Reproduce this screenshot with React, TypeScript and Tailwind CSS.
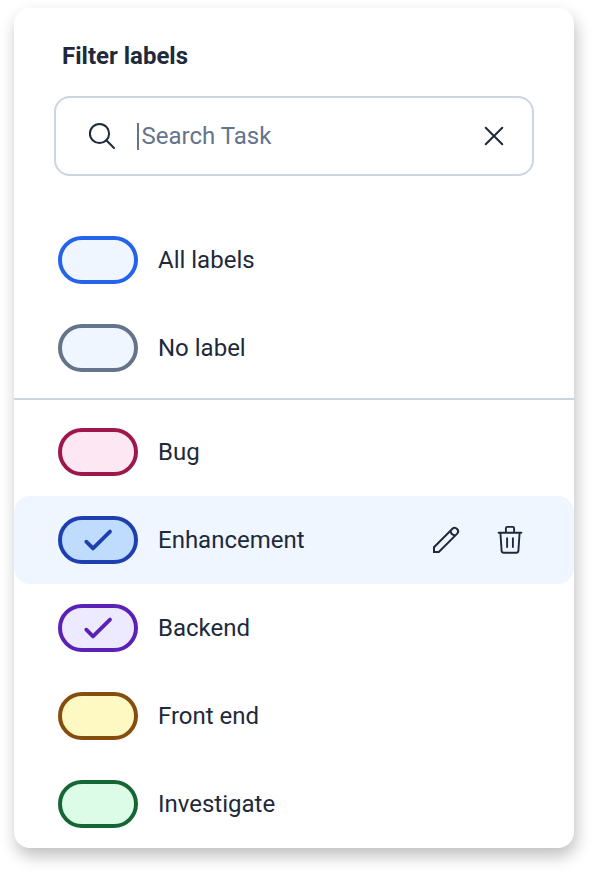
import React from "react";

type Label = {
  name: string;
  swatch: string;
  checked?: boolean;
  active?: boolean;
};

const generalLabels: Label[] = [
  { name: "All labels", swatch: "border-[#2563eb] bg-[#eff6ff]" },
  { name: "No label", swatch: "border-[#64748b] bg-[#eff6ff]" },
];

const customLabels: Label[] = [
  { name: "Bug", swatch: "border-[#9d174d] bg-[#fce7f3]" },
  { name: "Enhancement", swatch: "border-[#1e40af] bg-[#bfdbfe] text-[#1e40af]", checked: true, active: true },
  { name: "Backend", swatch: "border-[#5b21b6] bg-[#ede9fe] text-[#5b21b6]", checked: true },
  { name: "Front end", swatch: "border-[#854d0e] bg-[#fef9c3]" },
  { name: "Investigate", swatch: "border-[#166534] bg-[#dcfce7]" },
];

function Icon({ children, width = 2 }: { children: React.ReactNode; width?: number }) {
  return (
    <svg
      className="size-8 shrink-0"
      viewBox="0 0 32 32"
      fill="none"
      stroke="currentColor"
      strokeWidth={width}
      strokeLinecap="round"
      strokeLinejoin="round"
    >
      {children}
    </svg>
  );
}

function LabelRow({ label }: { label: Label }) {
  return (
    <li className={`flex h-[88px] items-center rounded-2xl pr-12 pl-11 ${label.active ? "bg-[#eff6ff]" : ""}`}>
      <span className={`flex h-12 w-20 items-center justify-center rounded-full border-4 ${label.swatch}`}>
        {label.checked && (
          <Icon width={3.8}>
            <path d="M4.3 17.7 11 24.4 28 7.6" />
          </Icon>
        )}
      </span>
      <span className="ml-5 flex-1">{label.name}</span>
      {label.active && (
        <span className="flex gap-8">
          <button aria-label="Edit">
            <Icon>
              <path
                d="M4 28v-4.8L22.4 4.8a3.4 3.4 0 0 1 4.8 4.8L8.8 28H4ZM20.6 6.6q.1 4.7 4.8 4.8"
                strokeLinejoin="miter"
              />
            </Icon>
          </button>
          <button aria-label="Delete">
            <Icon width={1.9}>
              <path d="M4.6 8.7h22.8M6.4 8.7l1.2 17.9a2.2 2.2 0 0 0 2.2 2.1h12.4a2.2 2.2 0 0 0 2.2-2.1l1.2-17.9M11.9 8.3V4.3a1.4 1.4 0 0 1 1.4-1.4h5.4a1.4 1.4 0 0 1 1.4 1.4v4M13.1 14.3v8.8M18.9 14.3v8.8" />
            </Icon>
          </button>
        </span>
      )}
    </li>
  );
}

export default function App() {
  return (
    <main className="h-[872px] w-[592px] overflow-hidden bg-white px-[14px] pt-2 pb-6 font-['Roboto',sans-serif] text-2xl leading-8 text-[#1e293b]">
      <section className="h-[840px] w-[560px] rounded-2xl bg-white shadow-[2px_8px_16px_rgba(0,0,0,0.25)]">
        <h1 className="pt-8 pl-12 font-bold">Filter labels</h1>
        <div className="mx-10 mt-6 flex h-20 items-center rounded-2xl border-2 border-[#cbd5e1] pr-[22px] pl-[30px]">
          <Icon>
            <circle cx="13.5" cy="13.5" r="9.6" />
            <path d="m20.3 20.3 7.7 7.7" />
          </Icon>
          <span className="ml-[19px] h-[27px] w-[1.5px] bg-[#64748b]" />
          <span className="ml-[3px] flex-1 text-[#64748b]">Search Task</span>
          <button aria-label="Clear">
            <Icon>
              <path d="m7.7 7.7 16.6 16.6M24.3 7.7 7.7 24.3" />
            </Icon>
          </button>
        </div>
        <ul className="mt-10">
          {generalLabels.map((label) => (
            <LabelRow key={label.name} label={label} />
          ))}
        </ul>
        <hr className="mt-1.5 mb-2 border-t-2 border-[#cbd5e1]" />
        <ul>
          {customLabels.map((label) => (
            <LabelRow key={label.name} label={label} />
          ))}
        </ul>
      </section>
    </main>
  );
}
